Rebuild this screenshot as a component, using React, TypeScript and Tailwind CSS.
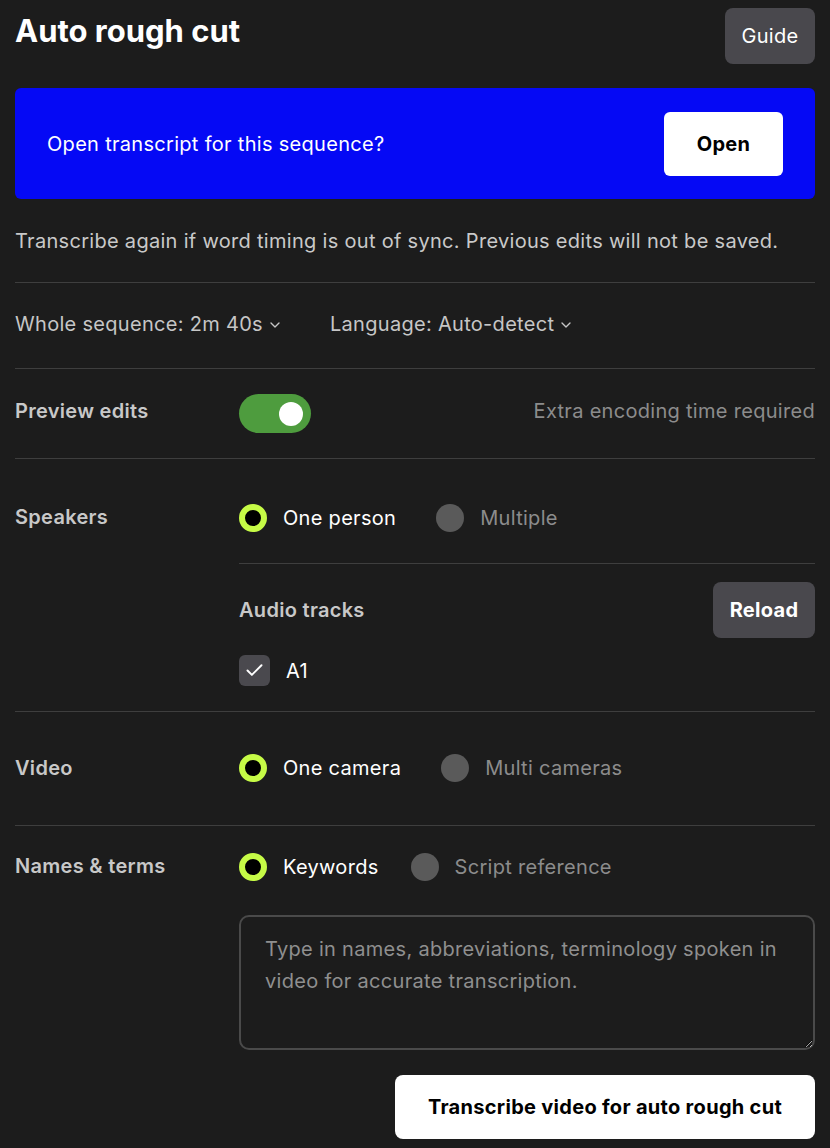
import { ChevronDown, Check } from "lucide-react";

function Radio({ label, checked }: { label: string; checked?: boolean }) {
  return (
    <label className="flex items-center gap-4 cursor-pointer">
      {checked ? (
        <span className="size-[28px] rounded-full border-[6px] border-[#c6fb46] bg-black" />
      ) : (
        <span className="size-[28px] rounded-full bg-[#5a5a5a]" />
      )}
      <span className={checked ? "text-white" : "text-[#8c8c8c]"}>{label}</span>
    </label>
  );
}

function Picker({ label }: { label: string }) {
  return (
    <button className="flex items-center gap-1 text-[#c6c6c6]">
      {label}
      <ChevronDown size={16} strokeWidth={2} className="mt-0.5" />
    </button>
  );
}

export default function App() {
  return (
    <div className="min-h-screen w-[830px] bg-[#1c1c1c] px-[15px] text-[20px] tracking-[0.3px] font-['Inter',sans-serif] text-white">
      <header className="flex items-start justify-between">
        <h1 className="mt-[12px] text-[31px] font-bold leading-[38px] tracking-normal">Auto rough cut</h1>
        <button className="mt-[8px] h-[56px] w-[90px] rounded-[8px] bg-[#49484d] text-[20px]">Guide</button>
      </header>

      <div className="mt-[24px] flex h-[111px] items-center justify-between rounded-[6px] bg-[#0509f5] pl-[32px] pr-[32px]">
        <span>Open transcript for this sequence?</span>
        <button className="h-[64px] w-[119px] rounded-[6px] bg-white font-bold text-black">Open</button>
      </div>

      <p className="border-b border-[#3e3e3e] pb-[26px] pt-[27px] leading-[30px] text-[#c9c9c9]">
        Transcribe again if word timing is out of sync. Previous edits will not be saved.
      </p>

      <div className="flex h-[86px] items-center gap-[47px] border-b border-[#3e3e3e] pb-[4px]">
        <Picker label="Whole sequence: 2m 40s" />
        <Picker label="Language: Auto-detect" />
      </div>

      <div className="flex h-[90px] items-center border-b border-[#3e3e3e]">
        <span className="w-[224px] pb-[6px] font-semibold text-[#c8c8c8]">Preview edits</span>
        <button className="flex h-[39px] w-[72px] items-center justify-end rounded-full bg-[#4e9c3e] pr-[8px]">
          <span className="size-[24px] rounded-full bg-white" />
        </button>
        <span className="ml-auto pb-[6px] text-[#8c8c8c]">Extra encoding time required</span>
      </div>

      <div className="flex border-b border-[#3e3e3e]">
        <span className="w-[224px] pt-[44px] font-semibold leading-[28px] text-[#c8c8c8]">Speakers</span>
        <div className="flex-1">
          <div className="flex h-[105px] items-start gap-[40px] border-b border-[#3e3e3e] pt-[44px]">
            <Radio label="One person" checked />
            <Radio label="Multiple" />
          </div>
          <div className="flex items-center justify-between pt-[18px]">
            <span className="font-semibold text-[#c8c8c8]">Audio tracks</span>
            <button className="h-[56px] w-[102px] rounded-[8px] bg-[#49484d] font-bold">Reload</button>
          </div>
          <label className="mt-[17px] mb-[25px] flex items-center gap-4">
            <span className="flex size-[31px] items-center justify-center rounded-[6px] bg-[#4a494e]">
              <Check size={21} strokeWidth={2.2} />
            </span>
            A1
          </label>
        </div>
      </div>

      <div className="flex h-[114px] items-center border-b border-[#3e3e3e] pb-[2px]">
        <span className="w-[224px] font-semibold text-[#c8c8c8]">Video</span>
        <div className="flex items-center gap-[40px]">
          <Radio label="One camera" checked />
          <Radio label="Multi cameras" />
        </div>
      </div>

      <div className="flex pb-[11px]">
        <span className="w-[224px] pt-[26px] font-semibold leading-[28px] text-[#c8c8c8]">Names &amp; terms</span>
        <div className="flex flex-1 flex-col">
          <div className="mt-[27px] flex h-[28px] items-center gap-[32px]">
            <Radio label="Keywords" checked />
            <Radio label="Script reference" />
          </div>
          <textarea
            className="mt-[34px] h-[135px] rounded-[10px] border-2 border-[#4a4a4a] bg-transparent px-[24px] py-[16px] leading-[32px] text-white outline-none placeholder:text-[#8f8f8f]"
            placeholder="Type in names, abbreviations, terminology spoken in video for accurate transcription."
          />
          <button className="ml-auto mt-[25px] h-[64px] w-[420px] rounded-[8px] bg-white font-bold text-black">
            Transcribe video for auto rough cut
          </button>
        </div>
      </div>
    </div>
  );
}
